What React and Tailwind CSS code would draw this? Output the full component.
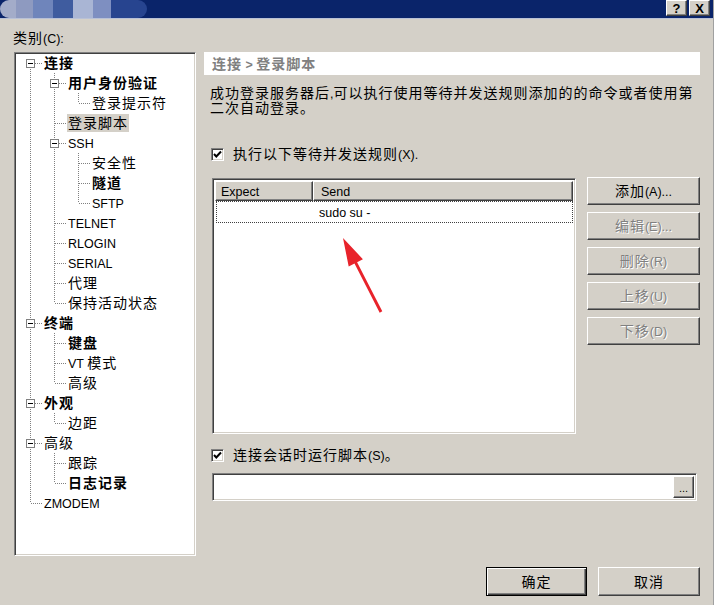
import React from 'react';

// CJK runs get the wider CJK size, latin runs a smaller one (like the old dialog font)
const CJK = /([\u3000-\u303f\u4e00-\u9fff\uff00-\uffef]+)/;
const T = ({ s }) => (
  <span className="whitespace-pre">
    {s.split(CJK).filter(Boolean).map((p, i) =>
      CJK.test(p) ? (
        <span key={i} className="text-[14px] tracking-[1px]">{p}</span>
      ) : (
        <span key={i} className="text-[12.5px]">{p}</span>
      )
    )}
  </span>
);

const raised = 'bg-[#d4d0c8] border border-t-white border-l-white border-b-[#404040] border-r-[#404040] shadow-[inset_-1px_-1px_0_#808080]';
const sunken = 'bg-white border border-t-[#808080] border-l-[#808080] border-b-white border-r-white shadow-[inset_1px_1px_0_#404040,inset_-1px_-1px_0_#d4d0c8]';

const TREE = [
  { t: '连接', b: true, c: [
    { t: '用户身份验证', b: true, c: [{ t: '登录提示符' }] },
    { t: '登录脚本', sel: true },
    { t: 'SSH', c: [{ t: '安全性' }, { t: '隧道', b: true }, { t: 'SFTP' }] },
    { t: 'TELNET' },
    { t: 'RLOGIN' },
    { t: 'SERIAL' },
    { t: '代理' },
    { t: '保持活动状态' },
  ] },
  { t: '终端', b: true, c: [{ t: '键盘', b: true }, { t: 'VT 模式' }, { t: '高级' }] },
  { t: '外观', b: true, c: [{ t: '边距' }] },
  { t: '高级', c: [{ t: '跟踪' }, { t: '日志记录', b: true }] },
  { t: 'ZMODEM' },
];

const flatten = (nodes, depth = 0, guides = [], out = []) => {
  nodes.forEach((n, i) => {
    const last = i === nodes.length - 1;
    out.push({ n, depth, guides, last, first: depth === 0 && i === 0 });
    if (n.c) flatten(n.c, depth + 1, [...guides, !last], out);
  });
  return out;
};

const Cell = ({ top, bottom, horiz, box }) => (
  <svg width="24" height="20" className="shrink-0" shapeRendering="crispEdges">
    {top && <line x1="12.5" y1="0" x2="12.5" y2="10" stroke="#808080" strokeDasharray="1 1" />}
    {bottom && <line x1="12.5" y1="10" x2="12.5" y2="20" stroke="#808080" strokeDasharray="1 1" />}
    {horiz && <line x1="13" y1="10.5" x2="24" y2="10.5" stroke="#808080" strokeDasharray="1 1" />}
    {box && (
      <>
        <rect x="8.5" y="6.5" width="8" height="8" fill="#fff" stroke="#808080" />
        <line x1="10" y1="10.5" x2="15" y2="10.5" stroke="#000" />
      </>
    )}
  </svg>
);

const TreeRow = ({ n, guides, last, first }) => (
  <div className="flex h-[20px] items-center">
    {guides.map((g, i) => (
      <Cell key={i} top={g} bottom={g} />
    ))}
    <Cell top={!first} bottom={!last} horiz box={!!n.c} />
    <span
      className={`ml-[1px] px-[1px] leading-[18px] whitespace-nowrap text-black ${n.b ? 'font-bold' : ''} ${n.sel ? 'bg-[#d4d0c8]' : ''}`}
    >
      <T s={n.t} />
    </span>
  </div>
);

const Check = () => (
  <span className={`w-[13px] h-[13px] shrink-0 flex items-center justify-center ${sunken}`}>
    <svg width="9" height="9" viewBox="0 0 9 9">
      <path d="M1 4 L3.3 6.5 L8 1.5" fill="none" stroke="#000" strokeWidth="2" />
    </svg>
  </span>
);

const SideButton = ({ label, disabled }) => (
  <div
    className={`h-[28px] flex items-center justify-center ${raised} ${disabled ? 'text-[#808080] [text-shadow:1px_1px_0_#fff]' : 'text-black'}`}
  >
    <T s={label} />
  </div>
);

export default function App() {
  const rows = flatten(TREE);
  return (
    <div className="relative w-[714px] h-[605px] overflow-hidden bg-[#d4d0c8] border-r border-[#a0a0a0] flex flex-col font-['Liberation_Sans','Noto_Sans_CJK_SC',sans-serif] text-black">
      {/* title bar, left part is mosaicked in the screenshot */}
      <div className="h-[18px] shrink-0 bg-[#0a246a] flex items-start">
        <div className="flex h-[18px]">
          <div className="w-[16px] bg-[#a3acc9] rounded-l-[9px]" />
          <div className="w-[17px] bg-[#8e9ac0]" />
          <div className="w-[20px] bg-[#6f85bb]" />
          <div className="w-[20px] bg-[#3f5c9f]" />
          <div className="w-[20px] bg-[#a9b5d4]" />
          <div className="w-[18px] bg-[#7e8fc1]" />
          <div className="w-[36px] bg-[#27448f] rounded-r-[9px]" />
        </div>
        <div className="ml-auto flex gap-[2px] mr-[3px]">
          <div className={`w-[21px] h-[16px] flex items-center justify-center text-[13px] font-bold leading-none ${raised}`}>?</div>
          <div className={`w-[21px] h-[16px] flex items-center justify-center text-[13px] font-bold leading-none ${raised}`}>X</div>
        </div>
      </div>
      <div className="h-[1px] shrink-0 bg-[#b9c1d6]" />

      <div className="flex pl-[13px]">
        {/* left: category tree */}
        <div className="w-[183px] flex flex-col">
          <div className="h-[33px] pt-[4px] flex items-center leading-none">
            <T s="类别(C):" />
          </div>
          <div className={`ml-[1px] h-[504px] pl-[3px] ${sunken}`}>
            <div>
              {rows.map((r, i) => (
                <TreeRow key={i} {...r} />
              ))}
            </div>
          </div>
        </div>

        {/* right: page */}
        <div className="ml-[8px] w-[496px] flex flex-col">
          <div className="mt-[33px] h-[23px] bg-white flex items-center pl-[8px] text-[#808080] font-bold">
            <T s="连接 > 登录脚本" />
          </div>
          <div className="mt-[10px] h-[30px] pl-[6px] leading-[15px] whitespace-nowrap overflow-visible">
            <div className="h-[15px] leading-[15px]">
              <T s="成功登录服务器后,可以执行使用等待并发送规则添加的的命令或者使用第" />
            </div>
            <div className="h-[15px] leading-[15px]">
              <T s="二次自动登录。" />
            </div>
          </div>
          <div className="mt-[31px] h-[16px] flex items-center gap-[9px] pl-[7px]">
            <Check />
            <span className="leading-none">
              <T s="执行以下等待并发送规则(X)." />
            </span>
          </div>

          <div className="mt-[15px] flex items-start">
            <div className={`ml-[8px] mt-[1px] w-[364px] h-[256px] p-[2px] ${sunken}`}>
              <div className="flex h-[20px]">
                <div className={`w-[98px] flex items-center pl-[5px] ${raised}`}>
                  <T s="Expect" />
                </div>
                <div className={`flex-1 flex items-center pl-[7px] ${raised}`}>
                  <T s="Send" />
                </div>
              </div>
              <div className="ml-[1px] h-[22px] border border-dotted border-[#404040] flex items-center pl-[102px]">
                <T s="sudo su -" />
              </div>
            </div>
            <div className="ml-[11px] w-[113px] flex flex-col gap-[7px]">
              <SideButton label="添加(A)..." />
              <SideButton label="编辑(E)..." disabled />
              <SideButton label="删除(R)" disabled />
              <SideButton label="上移(U)" disabled />
              <SideButton label="下移(D)" disabled />
            </div>
          </div>

          <div className="mt-[13px] h-[16px] flex items-center gap-[9px] pl-[7px]">
            <Check />
            <span className="leading-none">
              <T s="连接会话时运行脚本(S)。" />
            </span>
          </div>
          <div className={`mt-[10px] ml-[8px] w-[485px] h-[28px] flex justify-end items-stretch p-[2px] ${sunken}`}>
            <div className={`w-[21px] flex items-end justify-center pb-[3px] text-[11px] leading-none ${raised}`}>...</div>
          </div>

          <div className="mt-[66px] flex justify-end gap-[11px]">
            <div className="w-[101px] h-[29px] flex items-center justify-center border border-black shadow-[inset_1px_1px_0_#fff,inset_-1px_-1px_0_#404040,inset_-2px_-2px_0_#808080]">
              <T s="确定" />
            </div>
            <div className={`w-[102px] h-[29px] flex items-center justify-center ${raised}`}>
              <T s="取消" />
            </div>
          </div>
        </div>
      </div>

      {/* red annotation arrow */}
      <svg className="absolute inset-0 pointer-events-none" width="714" height="605">
        <polygon
          points="343,238 362.9,259.2 357.1,262.2 382.3,311.3 379.7,312.7 354.5,263.6 348.7,266.6"
          fill="#e8232b"
        />
      </svg>
    </div>
  );
}
